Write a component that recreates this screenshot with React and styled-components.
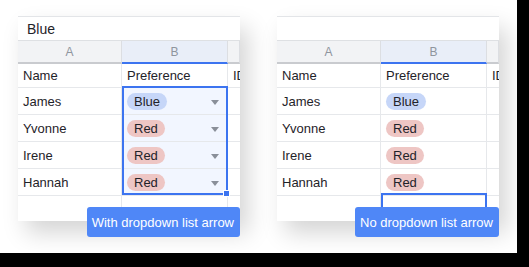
import React from 'react'
import styled, { createGlobalStyle } from 'styled-components'

const Global = createGlobalStyle`
  html, body {
    margin: 0;
    padding: 0;
    background: #000;
  }
  body {
    font-family: "Liberation Sans", Arial, sans-serif;
  }
`

const Canvas = styled.div`
  width: 517px;
  height: 253px;
  background: #fff;
  display: flex;
  gap: 37px;
  padding: 16px 0 0 18px;
  box-sizing: border-box;
`

const PanelWrap = styled.div`
  position: relative;
  width: 222px;
  height: 205px;
`

const Sheet = styled.div`
  width: 100%;
  height: 100%;
  overflow: hidden;
  background: #fff;
  border-top: 1px solid #e3e5e8;
  box-sizing: border-box;
  box-shadow: 8px 12px 22px rgba(0, 0, 0, 0.17);
`

const FormulaBar = styled.div`
  height: 23px;
  display: flex;
  align-items: center;
  padding-left: 9px;
  font-size: 14px;
  color: #1f2329;
  border-bottom: 1px solid #dee0e3;
`

const Row = styled.div`
  display: grid;
  grid-template-columns: 104px 106px 1fr;
  height: ${p => p.h}px;
  box-sizing: border-box;
  border-bottom: ${p => (p.bare ? 'none' : '1px solid #e6e8eb')};
`

const HeadCell = styled.div`
  display: flex;
  align-items: center;
  justify-content: center;
  font-size: 12px;
  color: #8f959e;
  background: ${p => (p.active ? '#e9eef8' : '#f2f3f5')};
  border-right: 1px solid #dcdee2;
  border-bottom: 2px solid ${p => (p.active ? '#3c74f0' : '#c9cbcf')};
`

const Cell = styled.div`
  display: flex;
  align-items: center;
  justify-content: space-between;
  padding: 0 8px 0 5px;
  font-size: 13px;
  color: #1f2329;
  white-space: nowrap;
  background: ${p => (p.selected ? '#f2f6ff' : '#fff')};
  border-right: 1px solid #e6e8eb;
`

const Pill = styled.span`
  display: inline-flex;
  align-items: center;
  height: 17px;
  padding: 0 7px;
  border-radius: 9px;
  font-size: 13px;
  color: #1f2329;
  background: ${p => (p.color === 'blue' ? '#c6d6f8' : '#eec6c4')};
`

const Arrow = styled.span`
  width: 0;
  height: 0;
  margin-top: 2px;
  border-left: 4px solid transparent;
  border-right: 4px solid transparent;
  border-top: 5px solid ${p => (p.faint ? '#c4c7cc' : '#8a8f99')};
`

const Selection = styled.div`
  position: absolute;
  left: 104px;
  top: ${p => p.top}px;
  width: 106px;
  height: ${p => p.h}px;
  box-sizing: border-box;
  border: 2px solid #3c74f0;
  pointer-events: none;
`

const Handle = styled.div`
  position: absolute;
  right: -4px;
  bottom: -4px;
  width: 5px;
  height: 5px;
  background: #3c74f0;
  border: 1px solid #fff;
`

const Tip = styled.div`
  position: absolute;
  right: 0;
  top: 191px;
  height: 30px;
  display: flex;
  align-items: center;
  padding: 0 6px 0 5px;
  border-radius: 3px;
  background: #4f87f7;
  color: #fff;
  font-size: 13px;
  white-space: nowrap;
`

const people = [
  ['James', 'Blue', 'blue'],
  ['Yvonne', 'Red', 'red'],
  ['Irene', 'Red', 'red'],
  ['Hannah', 'Red', 'red'],
]

function Panel({ arrows, formula, label }) {
  return (
    <PanelWrap>
      <Sheet>
        <FormulaBar>{formula}</FormulaBar>
        <Row h={23} bare>
          <HeadCell>A</HeadCell>
          <HeadCell active>B</HeadCell>
          <HeadCell />
        </Row>
        <Row h={24}>
          <Cell>Name</Cell>
          <Cell>Preference</Cell>
          <Cell>ID</Cell>
        </Row>
        {people.map(([name, pref, color]) => (
          <Row h={27} key={name}>
            <Cell>{name}</Cell>
            <Cell selected={arrows}>
              <Pill color={color}>{pref}</Pill>
              {arrows && <Arrow />}
            </Cell>
            <Cell />
          </Row>
        ))}
        <Row h={27}>
          <Cell />
          <Cell>{arrows && <><span /><Arrow faint /></>}</Cell>
          <Cell />
        </Row>
      </Sheet>
      {arrows ? (
        <Selection top={70} h={109}>
          <Handle />
        </Selection>
      ) : (
        <Selection top={177} h={20} />
      )}
      <Tip>{label}</Tip>
    </PanelWrap>
  )
}

export default function App() {
  return (
    <>
      <Global />
      <Canvas>
        <Panel arrows formula="Blue" label="With dropdown list arrow" />
        <Panel formula="" label="No dropdown list arrow" />
      </Canvas>
    </>
  )
}
